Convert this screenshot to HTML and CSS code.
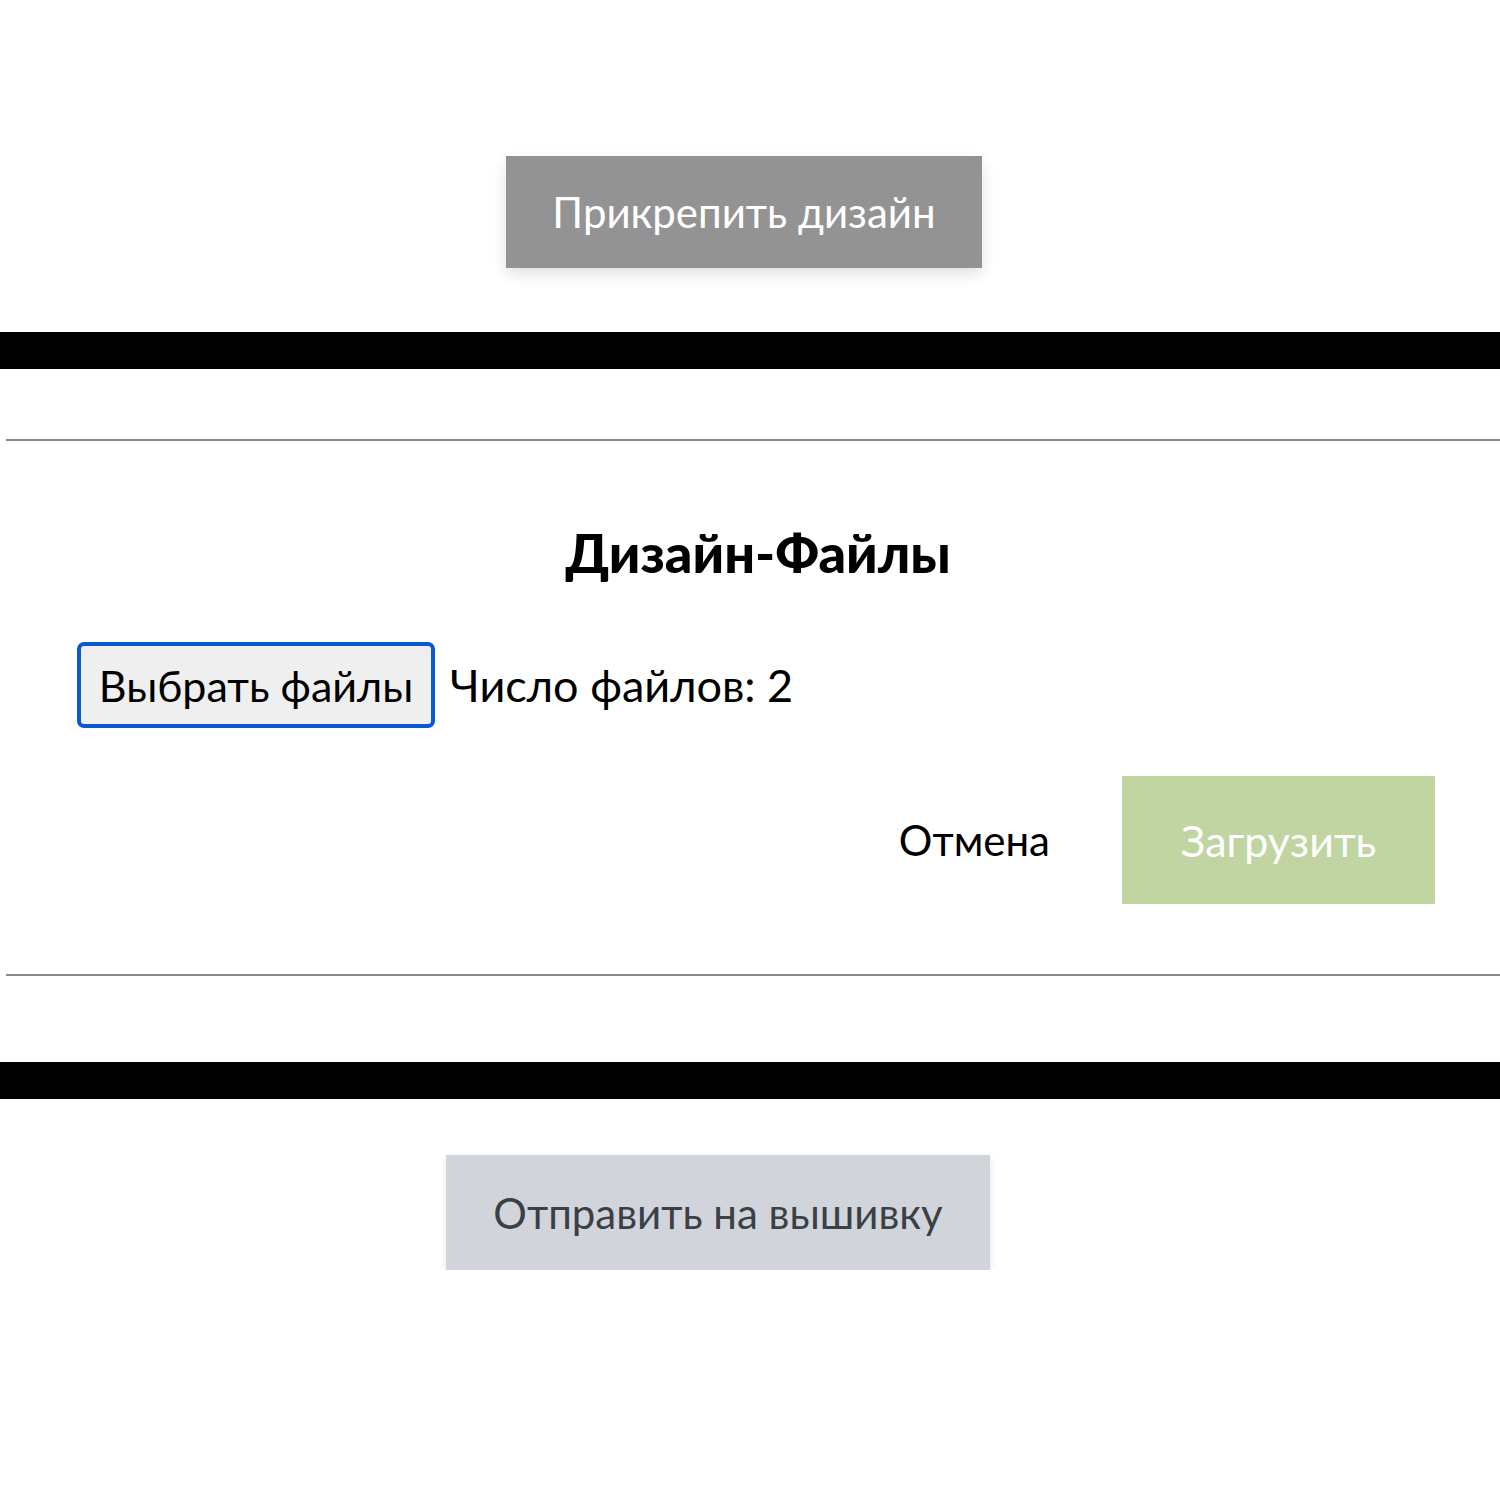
FILE: index.html
```html
<!DOCTYPE html>
<html lang="ru">
<head>
    <meta charset="UTF-8">
    <title>Дизайн-Файлы</title>
    <link rel="stylesheet" href="styles.css">
</head>
<body>

    <!-- Attach design -->
    <div class="top-section">
        <button class="attach-button">Прикрепить дизайн</button>
    </div>

    <div class="black-bar"></div>

    <!-- Upload modal -->
    <div class="upload-panel">
        <div class="panel-inner">
            <h2 class="panel-title">Дизайн-Файлы</h2>
            <div class="file-row">
                <button class="file-button">Выбрать файлы</button>
                <span class="file-count">Число файлов: 2</span>
            </div>
            <div class="actions">
                <button class="cancel-button">Отмена</button>
                <button class="upload-button">Загрузить</button>
            </div>
        </div>
    </div>

    <div class="black-bar bottom"></div>

    <div class="bottom-section">
        <button class="send-button">Отправить на вышивку</button>
    </div>

</body>
</html>
```

FILE: styles.css
```css
body {
    font-family: Lato, "Noto Sans", sans-serif;
    margin: 0;
    padding: 0;
    background-color: #fff;
    color: #000;
}

button {
    font-family: inherit;
    border: none;
    cursor: pointer;
}

.top-section {
    height: 332px;
    padding-top: 156px;
    box-sizing: border-box;
}

.attach-button {
    display: block;
    margin-left: 506px;
    width: 476px;
    height: 112px;
    background-color: #939393;
    color: #fff;
    font-size: 42px;
    box-shadow: 0 6px 14px rgba(0, 0, 0, 0.12);
}

.black-bar {
    height: 37px;
    background-color: #000;
}

/* Panel between the two bars */
.upload-panel {
    padding: 70px 0 86px 6px;
}

.panel-inner {
    border-top: 2px solid #8a8a8a;
    border-bottom: 2px solid #8a8a8a;
    padding: 0 0 70px 0;
}

.panel-title {
    margin: 84px 0 0 0;
    text-align: center;
    font-size: 54px;
    font-weight: 900;
    line-height: 56px;
    padding-left: 10px;
}

.file-row {
    display: flex;
    align-items: center;
    margin: 61px 0 0 71px;
}

.file-button {
    width: 358px;
    height: 86px;
    background-color: #efefef;
    border: 4px solid #0b59d0;
    border-radius: 7px;
    font-size: 43px;
    color: #000;
    padding: 0;
}

.file-count {
    font-size: 45px;
    margin-left: 15px;
}

.actions {
    display: flex;
    justify-content: flex-end;
    align-items: center;
    gap: 72px;
    margin: 48px 65px 0 0;
}

.cancel-button {
    background: none;
    font-size: 42px;
    color: #000;
    padding: 0;
}

.upload-button {
    width: 313px;
    height: 128px;
    background-color: #c0d5a2;
    color: #fff;
    font-size: 43px;
}

.bottom-section {
    padding-top: 56px;
}

.send-button {
    display: block;
    margin-left: 446px;
    width: 544px;
    height: 115px;
    background-color: #d1d5db;
    color: #3b3f46;
    font-size: 42px;
    box-shadow: 0 4px 8px rgba(0, 0, 0, 0.1);
}
```
